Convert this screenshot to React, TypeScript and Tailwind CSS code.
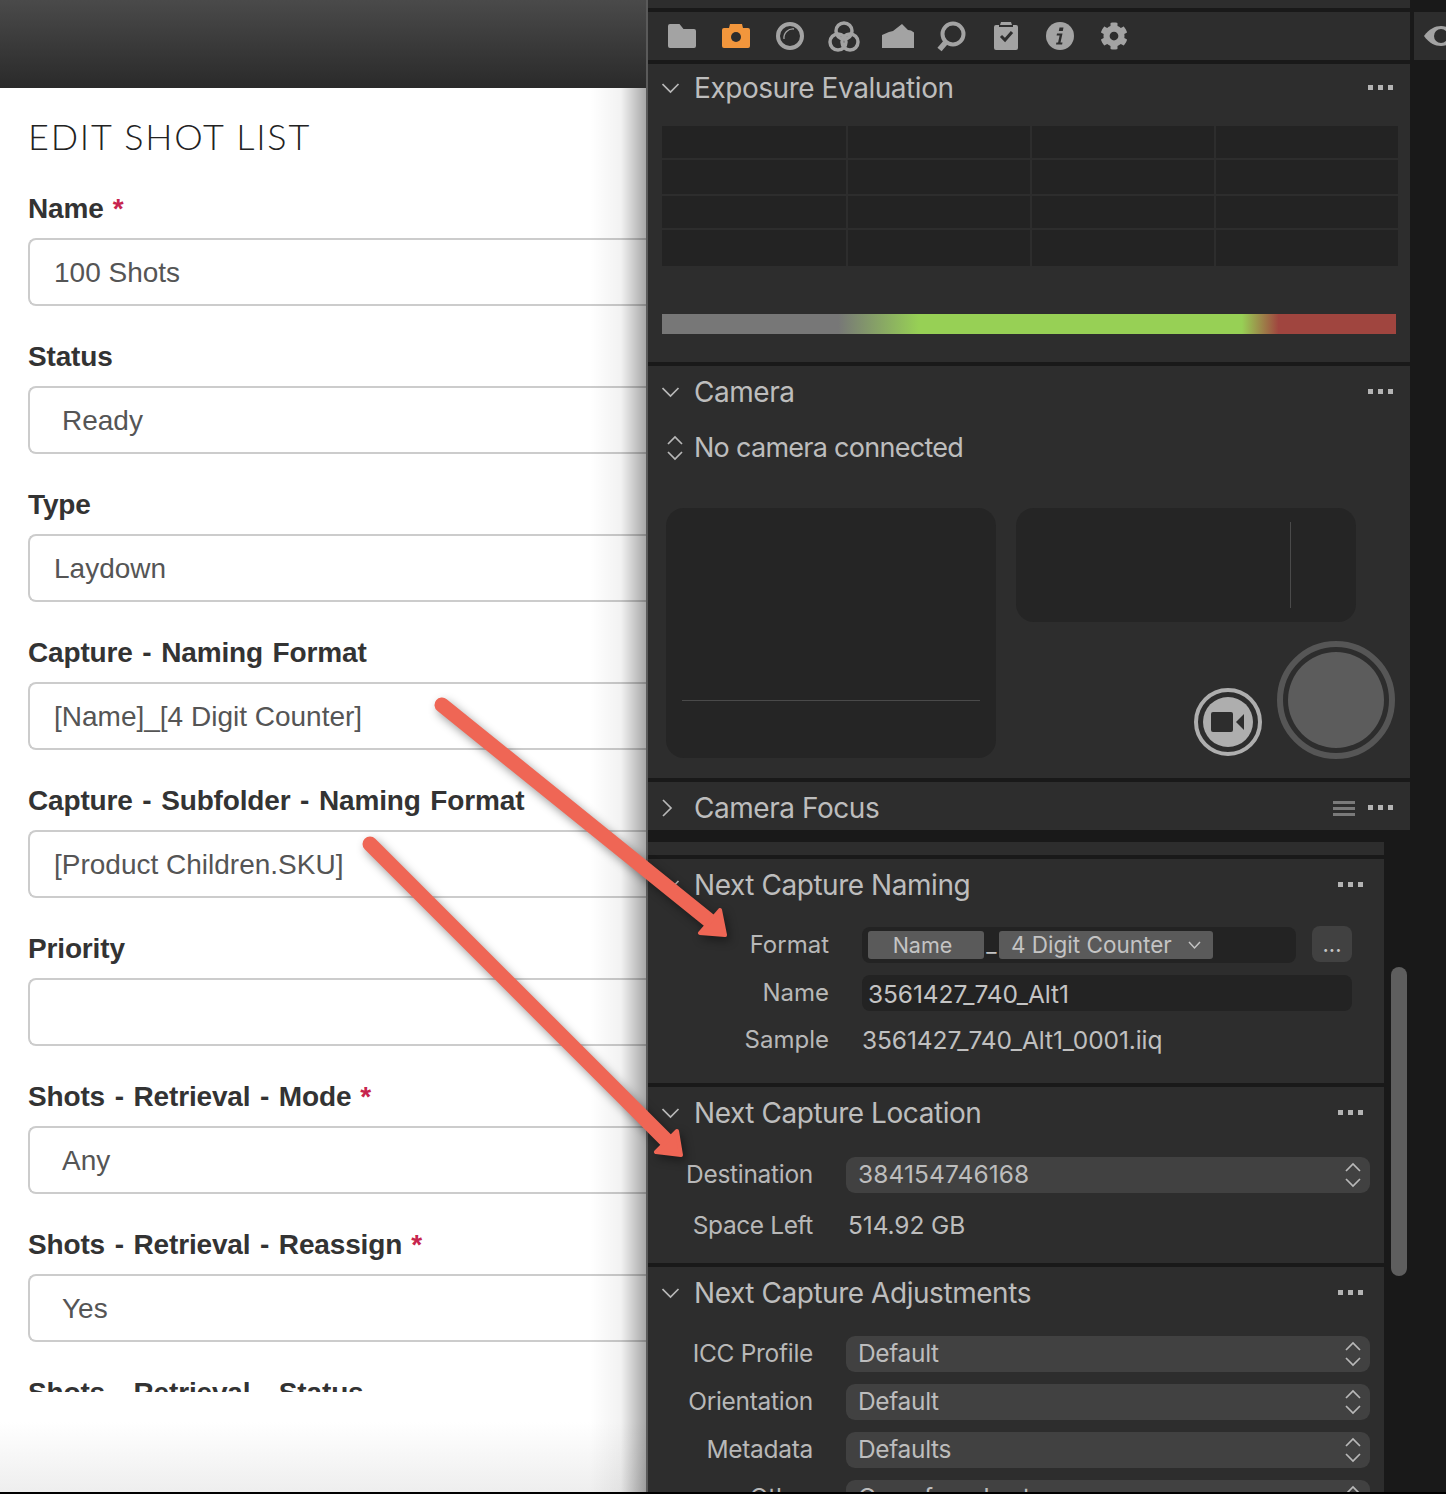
import { FaCog } from "react-icons/fa";

const fields = [
  { label: "Name", required: true, value: "100 Shots" },
  { label: "Status", value: "Ready", select: true },
  { label: "Type", value: "Laydown" },
  { label: "Capture - Naming Format", value: "[Name]_[4 Digit Counter]" },
  { label: "Capture - Subfolder - Naming Format", value: "[Product Children.SKU]" },
  { label: "Priority", value: "" },
  { label: "Shots - Retrieval - Mode", required: true, value: "Any", select: true },
  { label: "Shots - Retrieval - Reassign", required: true, value: "Yes", select: true },
  { label: "Shots - Retrieval - Status", value: "" },
];

function Field({ label, required, value, select }: { label: string; required?: boolean; value: string; select?: boolean }) {
  return (
    <div className="h-[148px] shrink-0">
      <div className="h-[40px] mb-[10px] leading-[41px] text-[28px] font-bold text-[#333] tracking-[-0.15px] [word-spacing:2px] whitespace-nowrap">
        {label}
        {required && <span className="text-[#c7254e] ml-[9px]">*</span>}
      </div>
      <div className={`h-[68px] pt-[2px] border-2 border-r-0 border-[#ccc] rounded-l-[8px] flex items-center text-[28px] text-[#555] whitespace-nowrap ${select ? "pl-[32px]" : "pl-[24px]"}`}>
        {value}
      </div>
    </div>
  );
}

function Chevron({ open = true }: { open?: boolean }) {
  return (
    <svg width="18" height="18" viewBox="0 0 18 18" fill="none" stroke="#b8b8b8" strokeWidth="1.7" className="shrink-0">
      {open ? <polyline points="0.5,5 8.5,13 16.5,5" /> : <polyline points="1,1 9,9 1,17" />}
    </svg>
  );
}

function Dots() {
  return (
    <div className="flex gap-[5px] shrink-0 -mt-[1px]">
      <div className="w-[5px] h-[5px] bg-[#b4b4b4]" />
      <div className="w-[5px] h-[5px] bg-[#b4b4b4]" />
      <div className="w-[5px] h-[5px] bg-[#b4b4b4]" />
    </div>
  );
}

function UpDown({ className = "" }: { className?: string }) {
  return (
    <svg width="16" height="26" viewBox="0 0 16 26" fill="none" stroke="#b8b8b8" strokeWidth="1.7" className={`shrink-0 ${className}`}>
      <polyline points="1,9 8,2 15,9" />
      <polyline points="1,17 8,24 15,17" />
    </svg>
  );
}

function PanelHead({ title, right = 1410 }: { title: string; right?: number }) {
  return (
    <div className={`h-[48px] flex items-center pl-[14px] ${right === 1410 ? "pr-[17px]" : "pr-[21px]"}`}>
      <Chevron />
      <div className="ml-[14px] flex-1 text-[28px] text-[#bdbdbd] tracking-[-0.45px] whitespace-nowrap">{title}</div>
      <Dots />
    </div>
  );
}

function SelectRow({ label, value, digits }: { label: string; value: string; digits?: boolean }) {
  return (
    <div className="h-[36px] flex items-center mb-[12px]">
      <div className="w-[165px] -translate-y-px text-right text-[24.5px] text-[#b8b8b8] tracking-[-0.3px] whitespace-nowrap">{label}</div>
      <div className={`ml-[33px] w-[524px] h-[36px] rounded-[9px] bg-[#414141] flex items-center justify-between pl-[12px] pr-[9px] text-[24.5px] text-[#bdbdbd] ${digits ? "tracking-[0.1px]" : "tracking-[-0.35px]"}`}>
        <span className="-translate-y-px">{value}</span>
        <UpDown />
      </div>
    </div>
  );
}

function Toolbar() {
  return (
    <div className="h-[48px] flex-1 relative flex items-center pl-[20px] bg-[#2d2d2d]">
      <div className="flex items-center gap-[26px]">
        <svg width="28" height="24" viewBox="0 0 28 24" fill="#a3a3a3">
          <path d="M2 0h9.500l4 5H26a2 2 0 0 1 2 2v15a2 2 0 0 1-2 2H2a2 2 0 0 1-2-2V2a2 2 0 0 1 2-2z" />
        </svg>
        <svg width="28" height="24" viewBox="0 0 28 24">
          <path fill="#f2963c" d="M8 0h12l1 4h5a2 2 0 0 1 2 2v16a2 2 0 0 1-2 2H2a2 2 0 0 1-2-2V6a2 2 0 0 1 2-2h5z" />
          <circle cx="14" cy="13" r="5" fill="#2d2d2d" />
        </svg>
        <svg width="28" height="28" viewBox="0 0 28 28" fill="none" stroke="#a3a3a3">
          <circle cx="14" cy="14" r="12" strokeWidth="4" />
          <path d="M8 17a9 9 0 0 1 10-10" strokeWidth="1.300" />
        </svg>
        <svg width="32" height="31" viewBox="0 0 32 31" fill="none" stroke="#a3a3a3" strokeWidth="3.500" className="-ml-[2px]">
          <circle cx="16" cy="10" r="8" />
          <circle cx="10" cy="21" r="8" />
          <circle cx="22" cy="21" r="8" />
        </svg>
        <svg width="32" height="24" viewBox="0 0 32 24" fill="#a3a3a3" className="-ml-[4px]">
          <path d="M0 11 L7 8 L11 7 L20 0 L26 6 L29 6.500 L32 8.500 V24 H0 Z" />
        </svg>
        <svg width="29" height="31" viewBox="0 0 29 31" fill="none" stroke="#a3a3a3" className="-ml-[3px]">
          <circle cx="16" cy="13" r="10.500" strokeWidth="4" />
          <path d="M9 21 L2.500 28.500" strokeWidth="5.500" />
        </svg>
        <svg width="24" height="28" viewBox="0 0 24 28" className="ml-[2px]">
          <path fill="#a3a3a3" d="M7 0h10l1 3h4a2 2 0 0 1 2 2v21a2 2 0 0 1-2 2H2a2 2 0 0 1-2-2V5a2 2 0 0 1 2-2h4z" />
          <rect x="5" y="3" width="14" height="2" fill="#2d2d2d" />
          <polyline points="7,14 11,18 18,10" fill="none" stroke="#2d2d2d" strokeWidth="3" />
        </svg>
        <svg width="28" height="28" viewBox="0 0 28 28" className="ml-[2px]">
          <circle cx="14" cy="14" r="14" fill="#a3a3a3" />
          <path fill="#2d2d2d" d="M13.500 5.500h4l-.7 3.500h-4z M11 11.500h5.500l-2 9h2l-.4 2H10l.4-2h1.700l1.500-7H10.600z" />
        </svg>
        <FaCog size={28} color="#a3a3a3" />
      </div>
      <div className="absolute left-[42px] bottom-[-4px] w-[92px] h-[4px] bg-[linear-gradient(90deg,transparent,#f2963c_25%,#f2963c_75%,transparent)]" />
    </div>
  );
}

function GridCell() {
  return <div className="bg-[#232323]" />;
}

export default function App() {
  return (
    <div className="w-[1446px] h-[1494px] relative overflow-hidden bg-black font-['Inter',sans-serif]">
      <div className="h-[1492px] flex">
        {/* web form */}
        <div className="w-[646px] shrink-0 flex flex-col relative bg-white font-['Liberation_Sans',sans-serif]">
          <div className="h-[88px] shrink-0 bg-[linear-gradient(180deg,#4a4a4a,#2a2a2a)]" />
          <div className="h-[1304px] shrink-0 overflow-hidden pl-[28px]">
            <div className="h-[100px] pt-[25px] leading-[46px] text-[36px] font-light text-[#222] font-['Lato',sans-serif] tracking-[1.8px]">EDIT SHOT LIST</div>
            {fields.map((f) => (
              <Field key={f.label} {...f} />
            ))}
          </div>
          <div className="flex-1 bg-[linear-gradient(180deg,#ffffff_30%,#eeeeee)]" />
          <div className="absolute top-[88px] bottom-0 right-0 w-[56px] bg-[linear-gradient(90deg,rgba(0,0,0,0),rgba(0,0,0,0.05)_55%,rgba(0,0,0,0.35))]" />
        </div>

        {/* capture one inspector */}
        <div className="flex-1 flex flex-col bg-[#191919] border-l-2 border-[#5a5a5a] font-['Inter',sans-serif]">
          <div className="h-[8px] w-[762px] bg-[#2d2d2d] shrink-0" />
          <div className="h-[48px] mt-[4px] flex shrink-0 gap-[4px] overflow-hidden">
            <Toolbar />
            <div className="w-[32px] bg-[#2d2d2d] flex items-center pl-[10px] shrink-0">
              <svg width="34" height="22" viewBox="0 0 34 22" className="shrink-0">
                <path fill="#a3a3a3" d="M0 11 C5 4 11 1 17 1 S29 4 34 11 C29 18 23 21 17 21 S5 18 0 11z" />
                <circle cx="17" cy="11" r="7" fill="#2d2d2d" />
              </svg>
            </div>
          </div>

          <div className="h-[298px] mt-[4px] w-[762px] bg-[#2d2d2d] shrink-0">
            <PanelHead title="Exposure Evaluation" />
            <div className="ml-[14px] mt-[14px] w-[736px] h-[140px] grid grid-cols-[184px_182px_182px_182px] grid-rows-[32px_34px_32px_36px] gap-[2px]">
              {Array.from({ length: 16 }).map((_, i) => (
                <GridCell key={i} />
              ))}
            </div>
            <div className="ml-[14px] mt-[48px] w-[734px] h-[20px] bg-[linear-gradient(90deg,#777_0%,#777_24%,#97d055_35%,#97d055_79%,#a0453f_84%,#a0453f_100%)]" />
          </div>

          <div className="h-[412px] mt-[4px] w-[762px] bg-[#2d2d2d] shrink-0">
            <div className="pt-[2px]">
              <PanelHead title="Camera" />
            </div>
            <div className="h-[34px] mt-[15px] flex items-center pl-[19px] text-[27px] text-[#bdbdbd] tracking-[-0.72px]">
              <UpDown />
              <span className="ml-[11px]">No camera connected</span>
            </div>
            <div className="flex ml-[18px] mt-[43px]">
              <div className="w-[330px] h-[250px] rounded-[18px] bg-[#252525] pt-[192px] px-[16px]">
                <div className="h-[1px] bg-[#4a4a4a]" />
              </div>
              <div className="ml-[20px] w-[379px]">
                <div className="w-[340px] h-[114px] rounded-[18px] bg-[#252525] pt-[14px] pl-[274px]">
                  <div className="w-[1px] h-[86px] bg-[#4a4a4a]" />
                </div>
                <div className="flex justify-end items-end mt-[19px] gap-[15px]">
                  <div className="w-[68px] h-[68px] mb-[3px] rounded-full border-[4px] border-[#aeaeae] flex items-center justify-center">
                    <div className="w-[50px] h-[50px] rounded-full bg-[#aeaeae] flex items-center justify-center">
                      <svg width="34" height="22" viewBox="0 0 34 22" fill="#2d2d2d">
                        <rect x="0" y="1" width="22" height="20" rx="2" />
                        <polygon points="25,11 33,3 33,19" />
                      </svg>
                    </div>
                  </div>
                  <div className="w-[118px] h-[118px] rounded-full border-[6px] border-[#565656] flex items-center justify-center">
                    <div className="w-[96px] h-[96px] rounded-full bg-[#5c5c5c]" />
                  </div>
                </div>
              </div>
            </div>
          </div>

          <div className="h-[48px] mt-[4px] pt-[4px] w-[762px] bg-[#2d2d2d] shrink-0 flex items-center pl-[14px] pr-[17px]">
            <Chevron open={false} />
            <div className="ml-[14px] flex-1 text-[28px] text-[#bdbdbd] tracking-[-0.45px]">Camera Focus</div>
            <div className="w-[22px] mr-[13px] flex flex-col gap-[3px]">
              <div className="h-[3px] bg-[#7a7a7a]" />
              <div className="h-[3px] bg-[#7a7a7a]" />
              <div className="h-[3px] bg-[#7a7a7a]" />
            </div>
            <Dots />
          </div>

          <div className="flex-1 min-h-0 flex mt-[12px]">
            <div className="w-[736px] shrink-0 overflow-hidden">
              <div className="h-[13px] bg-[#2d2d2d]" />
              <div className="h-[224px] mt-[4px] bg-[#2d2d2d]">
                <div className="pt-[2px]">
                  <PanelHead title="Next Capture Naming" right={1384} />
                </div>
                <div className="h-[36px] mt-[18px] flex items-center">
                  <div className="w-[181px] text-right text-[24px] text-[#b8b8b8] whitespace-nowrap">Format</div>
                  <div className="ml-[33px] w-[434px] h-[36px] rounded-[8px] bg-[#232323] flex items-center pl-[6px] text-[22.500px] text-[#c4c4c4]">
                    <div className="w-[116px] h-[28px] pr-[7px] rounded-[3px] bg-[#5a5a5a] flex items-center justify-center text-[21.500px]">Name</div>
                    <div className="w-[15px] h-[28px] leading-[26px] text-center">_</div>
                    <div className="w-[214px] h-[28px] rounded-[3px] bg-[#5a5a5a] flex items-center pl-[12px] pr-[12px] justify-between whitespace-nowrap">
                      4 Digit Counter
                      <svg width="13" height="9" viewBox="0 0 13 9" fill="none" stroke="#c4c4c4" strokeWidth="1.500">
                        <polyline points="1,1 6.500,7 12,1" />
                      </svg>
                    </div>
                  </div>
                  <div className="ml-[16px] w-[40px] h-[36px] -translate-y-px rounded-[8px] bg-[#414141] text-center leading-[36px] text-[22px] text-[#c4c4c4]">...</div>
                </div>
                <div className="h-[36px] mt-[12px] flex items-center">
                  <div className="w-[181px] text-right text-[24px] text-[#b8b8b8]">Name</div>
                  <div className="ml-[33px] w-[490px] h-[36px] pt-[2px] rounded-[8px] bg-[#232323] flex items-center pl-[6px] text-[24.500px] text-[#c4c4c4] tracking-[-0.08px]">3561427_740_Alt1</div>
                </div>
                <div className="h-[36px] mt-[11px] flex items-center">
                  <div className="w-[181px] text-right text-[24px] text-[#b8b8b8]">Sample</div>
                  <div className="ml-[33px] text-[24.500px] text-[#c0c0c0] tracking-[-0.08px] whitespace-nowrap">3561427_740_Alt1_0001.iiq</div>
                </div>
              </div>
              <div className="h-[176px] mt-[4px] bg-[#2d2d2d]">
                <div className="pt-[2px]">
                  <PanelHead title="Next Capture Location" right={1384} />
                </div>
                <div className="mt-[20px]">
                  <SelectRow label="Destination" value="384154746168" digits />
                </div>
                <div className="h-[36px] mt-[14px] flex items-center">
                  <div className="w-[165px] text-right text-[24.500px] text-[#b8b8b8] tracking-[-0.4px]">Space Left</div>
                  <div className="ml-[35px] text-[24.500px] text-[#bdbdbd] tracking-[-0.1px]">514.92 GB</div>
                </div>
              </div>
              <div className="h-[300px] mt-[4px] bg-[#2d2d2d]">
                <div className="pt-[2px]">
                  <PanelHead title="Next Capture Adjustments" right={1384} />
                </div>
                <div className="mt-[19px]">
                  <SelectRow label="ICC Profile" value="Default" />
                  <SelectRow label="Orientation" value="Default" />
                  <SelectRow label="Metadata" value="Defaults" />
                  <SelectRow label="Other" value="Copy from Last" />
                </div>
              </div>
            </div>
            <div className="pl-[7px]">
              <div className="w-[16px] h-[309px] mt-[125px] rounded-full bg-[#5e5e5e]" />
            </div>
          </div>
        </div>
      </div>

      {/* annotation arrows */}
      <svg width="1446" height="1494" viewBox="0 0 1446 1494" className="absolute inset-0 pointer-events-none drop-shadow-[3px_4px_5px_rgba(0,0,0,0.4)]">
        <g stroke="#ef6655" fill="#ef6655" strokeLinejoin="round" strokeLinecap="round">
          <line x1="442" y1="705" x2="716" y2="926" strokeWidth="15" />
          <polygon points="725,935 720,910 700,933" strokeWidth="4" />
          <line x1="370" y1="844" x2="672" y2="1146" strokeWidth="15" />
          <polygon points="681,1155 677,1131 656,1152" strokeWidth="4" />
        </g>
      </svg>
    </div>
  );
}
